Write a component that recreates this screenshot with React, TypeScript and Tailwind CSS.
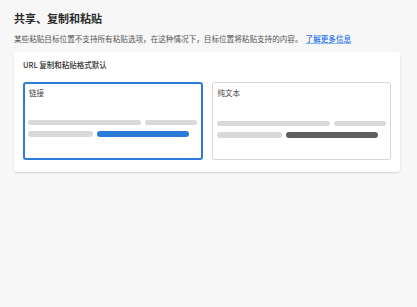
import React from "react";

const font = { fontFamily: '"Noto Sans CJK SC", "Noto Sans", sans-serif' };

function Option({ label, active }: { label: string; active?: boolean }) {
  return (
    <div
      className={
        "flex h-[78px] w-[180px] flex-col rounded-[3px] bg-white pt-[4px] " +
        (active ? "border-2 border-[#2b7bd8] px-[3px]" : "border border-[#d6d6d6] px-[4px]")
      }
    >
      <p className={"text-[7.5px] leading-[10px] text-[#444] " + (active ? "ml-[1px]" : "ml-[1px] mt-[1px]")}>{label}</p>
      <div className={"flex gap-[4px] " + (active ? "mt-[22px]" : "mt-[23px]")}>
        <div className="h-[5px] w-[113px] rounded-full bg-[#d9d9d9]" />
        <div className="h-[5px] w-[52px] rounded-full bg-[#d9d9d9]" />
      </div>
      <div className="mt-[6px] flex gap-[4px]">
        <div className="h-[6px] w-[65px] rounded-full bg-[#d9d9d9]" />
        <div className={"h-[6px] w-[92px] rounded-full " + (active ? "bg-[#2b7bd8]" : "bg-[#5f5f5f]")} />
      </div>
    </div>
  );
}

export default function App() {
  return (
    <div className="min-h-[307px] w-full bg-[#f7f7f7] px-[14px] pt-[10px]" style={font}>
      <h1 className="text-[11px] font-bold leading-[16px] text-[#2b2b2b]">共享、复制和粘贴</h1>
      <p className="mt-[7px] text-[7.6px] leading-[11px] text-[#555]">
        某些粘贴目标位置不支持所有粘贴选项，在这种情况下，目标位置将粘贴支持的内容。
        <a className="ml-[3px] font-medium text-[#1a73e8] underline decoration-[#8fb8f0]">了解更多信息</a>
      </p>
      <div className="mt-[8px] w-[386px] rounded-[3px] bg-white px-[9px] pb-[12px] pt-[8px] shadow-[0_1px_2px_rgba(0,0,0,0.15)]">
        <p className="text-[7.5px] font-medium leading-[10px] text-[#333]">URL 复制和粘贴格式默认</p>
        <div className="mt-[12px] flex gap-[9px]">
          <Option label="链接" active />
          <Option label="纯文本" />
        </div>
      </div>
    </div>
  );
}
